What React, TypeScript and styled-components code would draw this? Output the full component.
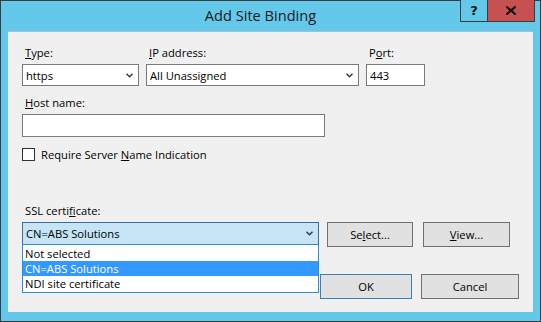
import * as React from "react"
import styled, { createGlobalStyle } from "styled-components"

const GlobalStyle = createGlobalStyle`
  html, body {
    margin: 0;
    padding: 0;
    background: #ffffff;
  }
  body {
    font-family: "Open Sans", "Noto Sans", "Liberation Sans", sans-serif;
    font-size: 11.2px;
    color: #000;
  }
`

// window frame
const Frame = styled.div`
  width: 541px;
  height: 322px;
  box-sizing: border-box;
  border: 1px solid #3b3b3b;
  background: #63c8ea;
  display: flex;
  flex-direction: column;
`

const TitleBar = styled.div`
  height: 30px;
  display: grid;
  grid-template-columns: 1fr auto;
  align-items: start;
`

const Title = styled.div`
  font-size: 14.6px;
  line-height: 28px;
  padding-left: 60px;
  text-align: center;
  color: #1a1a1a;
`

const CaptionButtons = styled.div`
  display: flex;
  margin-right: 5px;
  margin-top: -1px;
  border: 1px solid #3b3b3b;
  border-top: none;
`

const CaptionButton = styled.div<{ $close?: boolean }>`
  width: ${(p) => (p.$close ? "46px" : "26px")};
  height: 21px;
  display: flex;
  align-items: center;
  justify-content: center;
  background: ${(p) => (p.$close ? "#c75050" : "#63c8ea")};
  border-left: ${(p) => (p.$close ? "1px solid #3b3b3b" : "none")};
  font-family: "DejaVu Sans", sans-serif;
  font-weight: bold;
  font-size: 13px;
  color: #111;
`

const Client = styled.div`
  flex: 1;
  margin: 0 7px 9px 7px;
  background: #f0f0f0;
  border-top: 1px solid #9ec3d2;
  padding: 13px 0 0 14px;
  display: flex;
  flex-direction: column;
`

const Row = styled.div<{ $gap?: number; $top?: number }>`
  display: flex;
  align-items: flex-start;
  gap: ${(p) => p.$gap ?? 7}px;
  margin-top: ${(p) => p.$top ?? 0}px;
`

const Field = styled.div<{ $w: number }>`
  width: ${(p) => p.$w}px;
  display: flex;
  flex-direction: column;
`

const Label = styled.div`
  line-height: 16px;
  height: 16px;
  padding-left: 3px;
  margin-bottom: 3px;
  white-space: nowrap;
`

const Box = styled.div<{ $h?: number; $focus?: boolean }>`
  box-sizing: border-box;
  height: ${(p) => p.$h ?? 22}px;
  border: 1px solid ${(p) => (p.$focus ? "#3d6f94" : "#7a7a7a")};
  background: ${(p) => (p.$focus ? "#c6e4f6" : "#ffffff")};
  display: flex;
  align-items: center;
  padding: 0 5px 0 3px;
  position: relative;
`

const BoxText = styled.span`
  flex: 1;
  white-space: nowrap;
`

const Chevron = () => (
  <svg width="7" height="5" viewBox="0 0 7 5">
    <polyline points="0.5,0.8 3.5,3.8 6.5,0.8" fill="none" stroke="#3a3a3a" strokeWidth="1.5" />
  </svg>
)

const CloseGlyph = () => (
  <svg width="10" height="9" viewBox="0 0 10 9">
    <path d="M1 1 L9 8 M9 1 L1 8" stroke="#111" strokeWidth="2.2" strokeLinecap="square" />
  </svg>
)

const CheckRow = styled.label`
  display: flex;
  align-items: center;
  gap: 6px;
  margin-top: 9px;
  height: 16px;
`

const CheckBox = styled.span`
  box-sizing: border-box;
  width: 13px;
  height: 13px;
  border: 1px solid #333;
  background: #fff;
`

const List = styled.div`
  position: absolute;
  left: -1px;
  right: -1px;
  top: 100%;
  box-sizing: border-box;
  border: 1px solid #2b8fd3;
  background: #fff;
  padding: 1px 0;
  z-index: 2;
`

const Item = styled.div<{ $sel?: boolean }>`
  height: 15px;
  line-height: 15px;
  padding-left: 2px;
  white-space: nowrap;
  background: ${(p) => (p.$sel ? "#3399ff" : "transparent")};
  color: ${(p) => (p.$sel ? "#fff" : "#000")};
`

const Button = styled.div<{ $w: number; $default?: boolean }>`
  box-sizing: border-box;
  width: ${(p) => p.$w}px;
  height: 25px;
  border: 1px solid ${(p) => (p.$default ? "#3c7fb1" : "#707070")};
  background: #e1e1e1;
  display: flex;
  align-items: center;
  justify-content: center;
`

const SslArea = styled.div`
  display: flex;
  margin-top: 41px;
  gap: 1px;
`

const SslRight = styled.div`
  display: flex;
  flex-direction: column;
  padding-top: 19px;
`

const ButtonRow = styled.div<{ $gap: number; $indent: number; $top: number }>`
  display: flex;
  gap: ${(p) => p.$gap}px;
  margin-left: ${(p) => p.$indent}px;
  margin-top: ${(p) => p.$top}px;
`

export default function App() {
  return (
    <>
      <GlobalStyle />
      <Frame>
        <TitleBar>
          <Title>Add Site Binding</Title>
          <CaptionButtons>
            <CaptionButton>?</CaptionButton>
            <CaptionButton $close>
              <CloseGlyph />
            </CaptionButton>
          </CaptionButtons>
        </TitleBar>
        <Client>
          <Row>
            <Field $w={117}>
              <Label>
                <u>T</u>ype:
              </Label>
              <Box>
                <BoxText>https</BoxText>
                <Chevron />
              </Box>
            </Field>
            <Field $w={213}>
              <Label>
                <u>I</u>P address:
              </Label>
              <Box>
                <BoxText>All Unassigned</BoxText>
                <Chevron />
              </Box>
            </Field>
            <Field $w={59}>
              <Label>
                P<u>o</u>rt:
              </Label>
              <Box>
                <BoxText>443</BoxText>
              </Box>
            </Field>
          </Row>
          <Row $top={9}>
            <Field $w={303}>
              <Label>
                <u>H</u>ost name:
              </Label>
              <Box $h={23} />
            </Field>
          </Row>
          <CheckRow>
            <CheckBox />
            <span>
              Require Server <u>N</u>ame Indication
            </span>
          </CheckRow>
          <SslArea>
            <Field $w={297}>
              <Label>
                SSL certi<u>f</u>icate:
              </Label>
              <Box $h={23} $focus>
                <BoxText>CN=ABS Solutions</BoxText>
                <Chevron />
                <List>
                  <Item>Not selected</Item>
                  <Item $sel>CN=ABS Solutions</Item>
                  <Item>NDI site certificate</Item>
                </List>
              </Box>
            </Field>
            <SslRight>
              <ButtonRow $gap={10} $indent={7} $top={0}>
                <Button $w={86}>
                  Se<u>l</u>ect...
                </Button>
                <Button $w={87}>
                  <u>V</u>iew...
                </Button>
              </ButtonRow>
              <ButtonRow $gap={9} $indent={0} $top={27}>
                <Button $w={92} $default>
                  OK
                </Button>
                <Button $w={98}>Cancel</Button>
              </ButtonRow>
            </SslRight>
          </SslArea>
        </Client>
      </Frame>
    </>
  )
}
